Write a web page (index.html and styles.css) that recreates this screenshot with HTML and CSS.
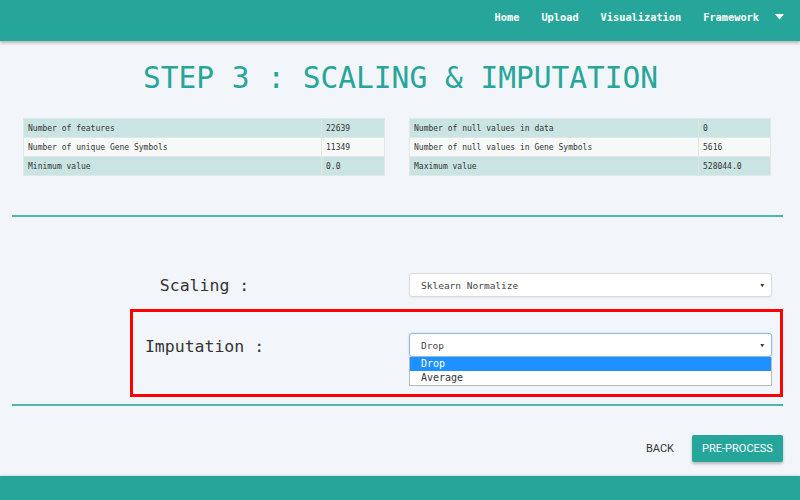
FILE: index.html
```html
<!DOCTYPE html>
<html>
<head>
<meta charset="utf-8">
<link rel="stylesheet" href="styles.css">
</head>
<body>
<header class="nav">
  <ul class="nav-links">
    <li>Home</li>
    <li>Upload</li>
    <li>Visualization</li>
    <li>Framework</li>
    <li class="caret"><svg width="9" height="6" viewBox="0 0 9 6"><path d="M0 0H9L4.5 5.5Z" fill="#fff"/></svg></li>
  </ul>
</header>
<main class="page">
  <h1 class="title">STEP 3 : SCALING &amp; IMPUTATION</h1>
  <section class="stats">
    <table class="stat-table">
      <tr><td>Number of features</td><td class="val">22639</td></tr>
      <tr><td>Number of unique Gene Symbols</td><td class="val">11349</td></tr>
      <tr><td>Minimum value</td><td class="val">0.0</td></tr>
    </table>
    <table class="stat-table">
      <tr><td>Number of null values in data</td><td class="val">0</td></tr>
      <tr><td>Number of null values in Gene Symbols</td><td class="val">5616</td></tr>
      <tr><td>Maximum value</td><td class="val">528044.0</td></tr>
    </table>
  </section>
  <hr class="rule rule-top">
  <section class="form">
    <div class="form-row row-scaling">
      <label class="form-label">Scaling :</label>
      <div class="select"><span>Sklearn Normalize</span><span class="arrow">▾</span></div>
    </div>
    <div class="form-row row-imputation">
      <label class="form-label label-imp">Imputation :</label>
      <div class="select-wrap">
        <div class="select select-focus"><span>Drop</span><span class="arrow">▾</span></div>
        <ul class="options">
          <li class="opt opt-active">Drop</li>
          <li class="opt">Average</li>
        </ul>
      </div>
    </div>
    <div class="highlight"></div>
  </section>
  <hr class="rule rule-bottom">
  <div class="actions">
    <button class="btn-flat">BACK</button>
    <button class="btn">PRE-PROCESS</button>
  </div>
</main>
<footer class="footer"></footer>
</body>
</html>
```
FILE: styles.css
```css
* { box-sizing: border-box; }
html, body { margin: 0; padding: 0; }
body {
  width: 800px;
  height: 500px;
  overflow: hidden;
  background: #f2f5f9;
  font-family: "DejaVu Sans Mono", monospace;
  color: #333;
  display: flex;
  flex-direction: column;
}
.nav {
  height: 41px;
  background: #26a69a;
  box-shadow: 0 2px 3px rgba(0,0,0,0.25);
  flex: none;
  position: relative;
  z-index: 2;
}
.nav-links {
  list-style: none;
  margin: 0;
  padding: 0 16px 7px 0;
  height: 100%;
  display: flex;
  justify-content: flex-end;
  align-items: center;
  gap: 22px;
  color: #fff;
  font-size: 10.3px;
  font-weight: bold;
}
.nav-links li { line-height: 14px; }
.caret { display: flex; align-items: center; margin-left: -6px; }
.page {
  flex: 1;
  padding: 0 17px 0 12px;
  display: flex;
  flex-direction: column;
}
.title {
  margin: 19px 0 0;
  text-align: center;
  font-weight: normal;
  font-size: 29.5px;
  line-height: 36px;
  color: #26a69a;
  padding-left: 6px;
}
.stats {
  display: grid;
  grid-template-columns: 362px 362px;
  column-gap: 24px;
  margin: 22px 0 0 11px;
}
.stat-table {
  border-collapse: collapse;
  width: 100%;
  font-size: 8px;
  color: #333;
}
.stat-table td {
  height: 19px;
  padding: 0 4px;
  border: 1px solid #dfe7e7;
}
.stat-table tr:nth-child(odd) td { background: #c9e4e2; }
.stat-table tr:nth-child(even) td { background: #f7f9f9; }
.stat-table td.val { width: 63px; }
.stats .stat-table:nth-child(2) td.val { width: 72px; }
.rule {
  border: 0;
  height: 2px;
  background: #4db6ac;
  margin: 0;
  width: 771px;
  flex: none;
}
.rule-top { margin-top: 39px; }
.form {
  position: relative;
  height: 187px;
  padding-top: 56px;
}
.form-row {
  display: grid;
  grid-template-columns: 385px 363px;
  column-gap: 12px;
  align-items: center;
}
.row-imputation { margin-top: 36px; align-items: start; }
.form-label {
  text-align: center;
  font-size: 16.5px;
  color: #333;
}
.label-imp { line-height: 24px; padding-top: 2px; }
.select {
  height: 24px;
  background: #fff;
  border: 1px solid #dcdcdc;
  border-radius: 3px;
  display: flex;
  align-items: center;
  justify-content: space-between;
  padding: 0 6px 0 11px;
  font-size: 9.5px;
  color: #444;
  box-shadow: 0 1px 2px rgba(0,0,0,0.06);
}
.select-focus { border-color: #8fbce6; box-shadow: 0 0 2px rgba(80,150,220,0.4); }
.arrow { font-size: 9px; color: #333; }
.select-wrap { position: relative; }
.options {
  position: absolute;
  top: 24px;
  left: 0;
  right: 0;
  list-style: none;
  margin: 0;
  padding: 0;
  background: #fff;
  border: 1px solid #b9b9b9;
  border-top: 0;
  font-size: 10px;
  z-index: 3;
}
.opt { height: 14px; line-height: 14px; padding-left: 11px; color: #333; }
.opt-active { background: #1e90ff; color: #fff; }
.highlight {
  position: absolute;
  left: 118px;
  top: 92px;
  width: 653px;
  height: 88px;
  border: 3px solid #ff0000;
  pointer-events: none;
}
.actions {
  display: flex;
  justify-content: flex-end;
  align-items: center;
  gap: 18px;
  margin-top: 29px;
}
.btn-flat {
  background: none;
  border: 0;
  font-family: "Roboto", "Liberation Sans", sans-serif;
  font-size: 11px;
  color: #333;
  padding: 0;
}
.btn {
  width: 91px;
  height: 27px;
  background: #26a69a;
  color: #fff;
  border: 0;
  border-radius: 2px;
  font-family: "Roboto", "Liberation Sans", sans-serif;
  font-size: 11px;
  box-shadow: 0 2px 3px rgba(0,0,0,0.25);
  padding: 0;
}
.footer {
  height: 24px;
  background: #26a69a;
  flex: none;
  box-shadow: 0 -1px 2px rgba(0,0,0,0.1);
}
```
